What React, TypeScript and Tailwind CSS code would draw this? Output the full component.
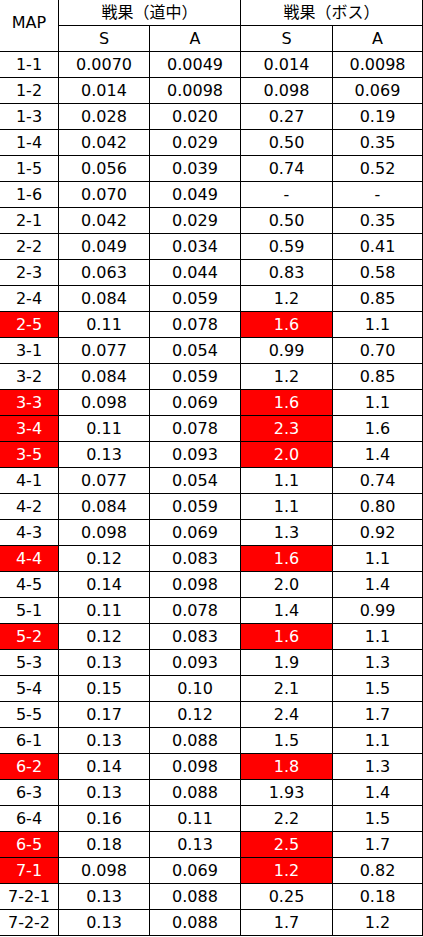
import React from 'react';

type Row = { map: string; s1: string; a1: string; s2: string; a2: string; hot?: boolean };

const rows: Row[] = [
  { map: '1-1', s1: '0.0070', a1: '0.0049', s2: '0.014', a2: '0.0098' },
  { map: '1-2', s1: '0.014', a1: '0.0098', s2: '0.098', a2: '0.069' },
  { map: '1-3', s1: '0.028', a1: '0.020', s2: '0.27', a2: '0.19' },
  { map: '1-4', s1: '0.042', a1: '0.029', s2: '0.50', a2: '0.35' },
  { map: '1-5', s1: '0.056', a1: '0.039', s2: '0.74', a2: '0.52' },
  { map: '1-6', s1: '0.070', a1: '0.049', s2: '-', a2: '-' },
  { map: '2-1', s1: '0.042', a1: '0.029', s2: '0.50', a2: '0.35' },
  { map: '2-2', s1: '0.049', a1: '0.034', s2: '0.59', a2: '0.41' },
  { map: '2-3', s1: '0.063', a1: '0.044', s2: '0.83', a2: '0.58' },
  { map: '2-4', s1: '0.084', a1: '0.059', s2: '1.2', a2: '0.85' },
  { map: '2-5', s1: '0.11', a1: '0.078', s2: '1.6', a2: '1.1', hot: true },
  { map: '3-1', s1: '0.077', a1: '0.054', s2: '0.99', a2: '0.70' },
  { map: '3-2', s1: '0.084', a1: '0.059', s2: '1.2', a2: '0.85' },
  { map: '3-3', s1: '0.098', a1: '0.069', s2: '1.6', a2: '1.1', hot: true },
  { map: '3-4', s1: '0.11', a1: '0.078', s2: '2.3', a2: '1.6', hot: true },
  { map: '3-5', s1: '0.13', a1: '0.093', s2: '2.0', a2: '1.4', hot: true },
  { map: '4-1', s1: '0.077', a1: '0.054', s2: '1.1', a2: '0.74' },
  { map: '4-2', s1: '0.084', a1: '0.059', s2: '1.1', a2: '0.80' },
  { map: '4-3', s1: '0.098', a1: '0.069', s2: '1.3', a2: '0.92' },
  { map: '4-4', s1: '0.12', a1: '0.083', s2: '1.6', a2: '1.1', hot: true },
  { map: '4-5', s1: '0.14', a1: '0.098', s2: '2.0', a2: '1.4' },
  { map: '5-1', s1: '0.11', a1: '0.078', s2: '1.4', a2: '0.99' },
  { map: '5-2', s1: '0.12', a1: '0.083', s2: '1.6', a2: '1.1', hot: true },
  { map: '5-3', s1: '0.13', a1: '0.093', s2: '1.9', a2: '1.3' },
  { map: '5-4', s1: '0.15', a1: '0.10', s2: '2.1', a2: '1.5' },
  { map: '5-5', s1: '0.17', a1: '0.12', s2: '2.4', a2: '1.7' },
  { map: '6-1', s1: '0.13', a1: '0.088', s2: '1.5', a2: '1.1' },
  { map: '6-2', s1: '0.14', a1: '0.098', s2: '1.8', a2: '1.3', hot: true },
  { map: '6-3', s1: '0.13', a1: '0.088', s2: '1.93', a2: '1.4' },
  { map: '6-4', s1: '0.16', a1: '0.11', s2: '2.2', a2: '1.5' },
  { map: '6-5', s1: '0.18', a1: '0.13', s2: '2.5', a2: '1.7', hot: true },
  { map: '7-1', s1: '0.098', a1: '0.069', s2: '1.2', a2: '0.82', hot: true },
  { map: '7-2-1', s1: '0.13', a1: '0.088', s2: '0.25', a2: '0.18' },
  { map: '7-2-2', s1: '0.13', a1: '0.088', s2: '1.7', a2: '1.2' },
];

const cell = 'flex items-center justify-center border-r border-b border-black h-[26px]';

const App = () => {
  return (
    <div
      className="w-[423px] bg-white text-[16px] text-black"
      style={{ fontFamily: '"DejaVu Sans", "Noto Sans CJK JP", sans-serif' }}
    >
      <div className="grid grid-cols-[59px_91px_91px_92px_90px]">
        <div className="row-span-2 flex items-center justify-center pb-1.5 border-r border-b border-black">MAP</div>
        <div className={`${cell} col-span-2`}>戦果（道中）</div>
        <div className={`${cell} col-span-2`}>戦果（ボス）</div>
        <div className={cell}>S</div>
        <div className={cell}>A</div>
        <div className={cell}>S</div>
        <div className={cell}>A</div>

        {rows.map((r) => (
          <React.Fragment key={r.map}>
            <div className={`${cell} ${r.hot ? 'bg-[#ff0000] text-white' : ''}`}>{r.map}</div>
            <div className={cell}>{r.s1}</div>
            <div className={cell}>{r.a1}</div>
            <div className={`${cell} ${r.hot ? 'bg-[#ff0000] text-white' : ''}`}>{r.s2}</div>
            <div className={cell}>{r.a2}</div>
          </React.Fragment>
        ))}
      </div>
    </div>
  );
};

export default App;
